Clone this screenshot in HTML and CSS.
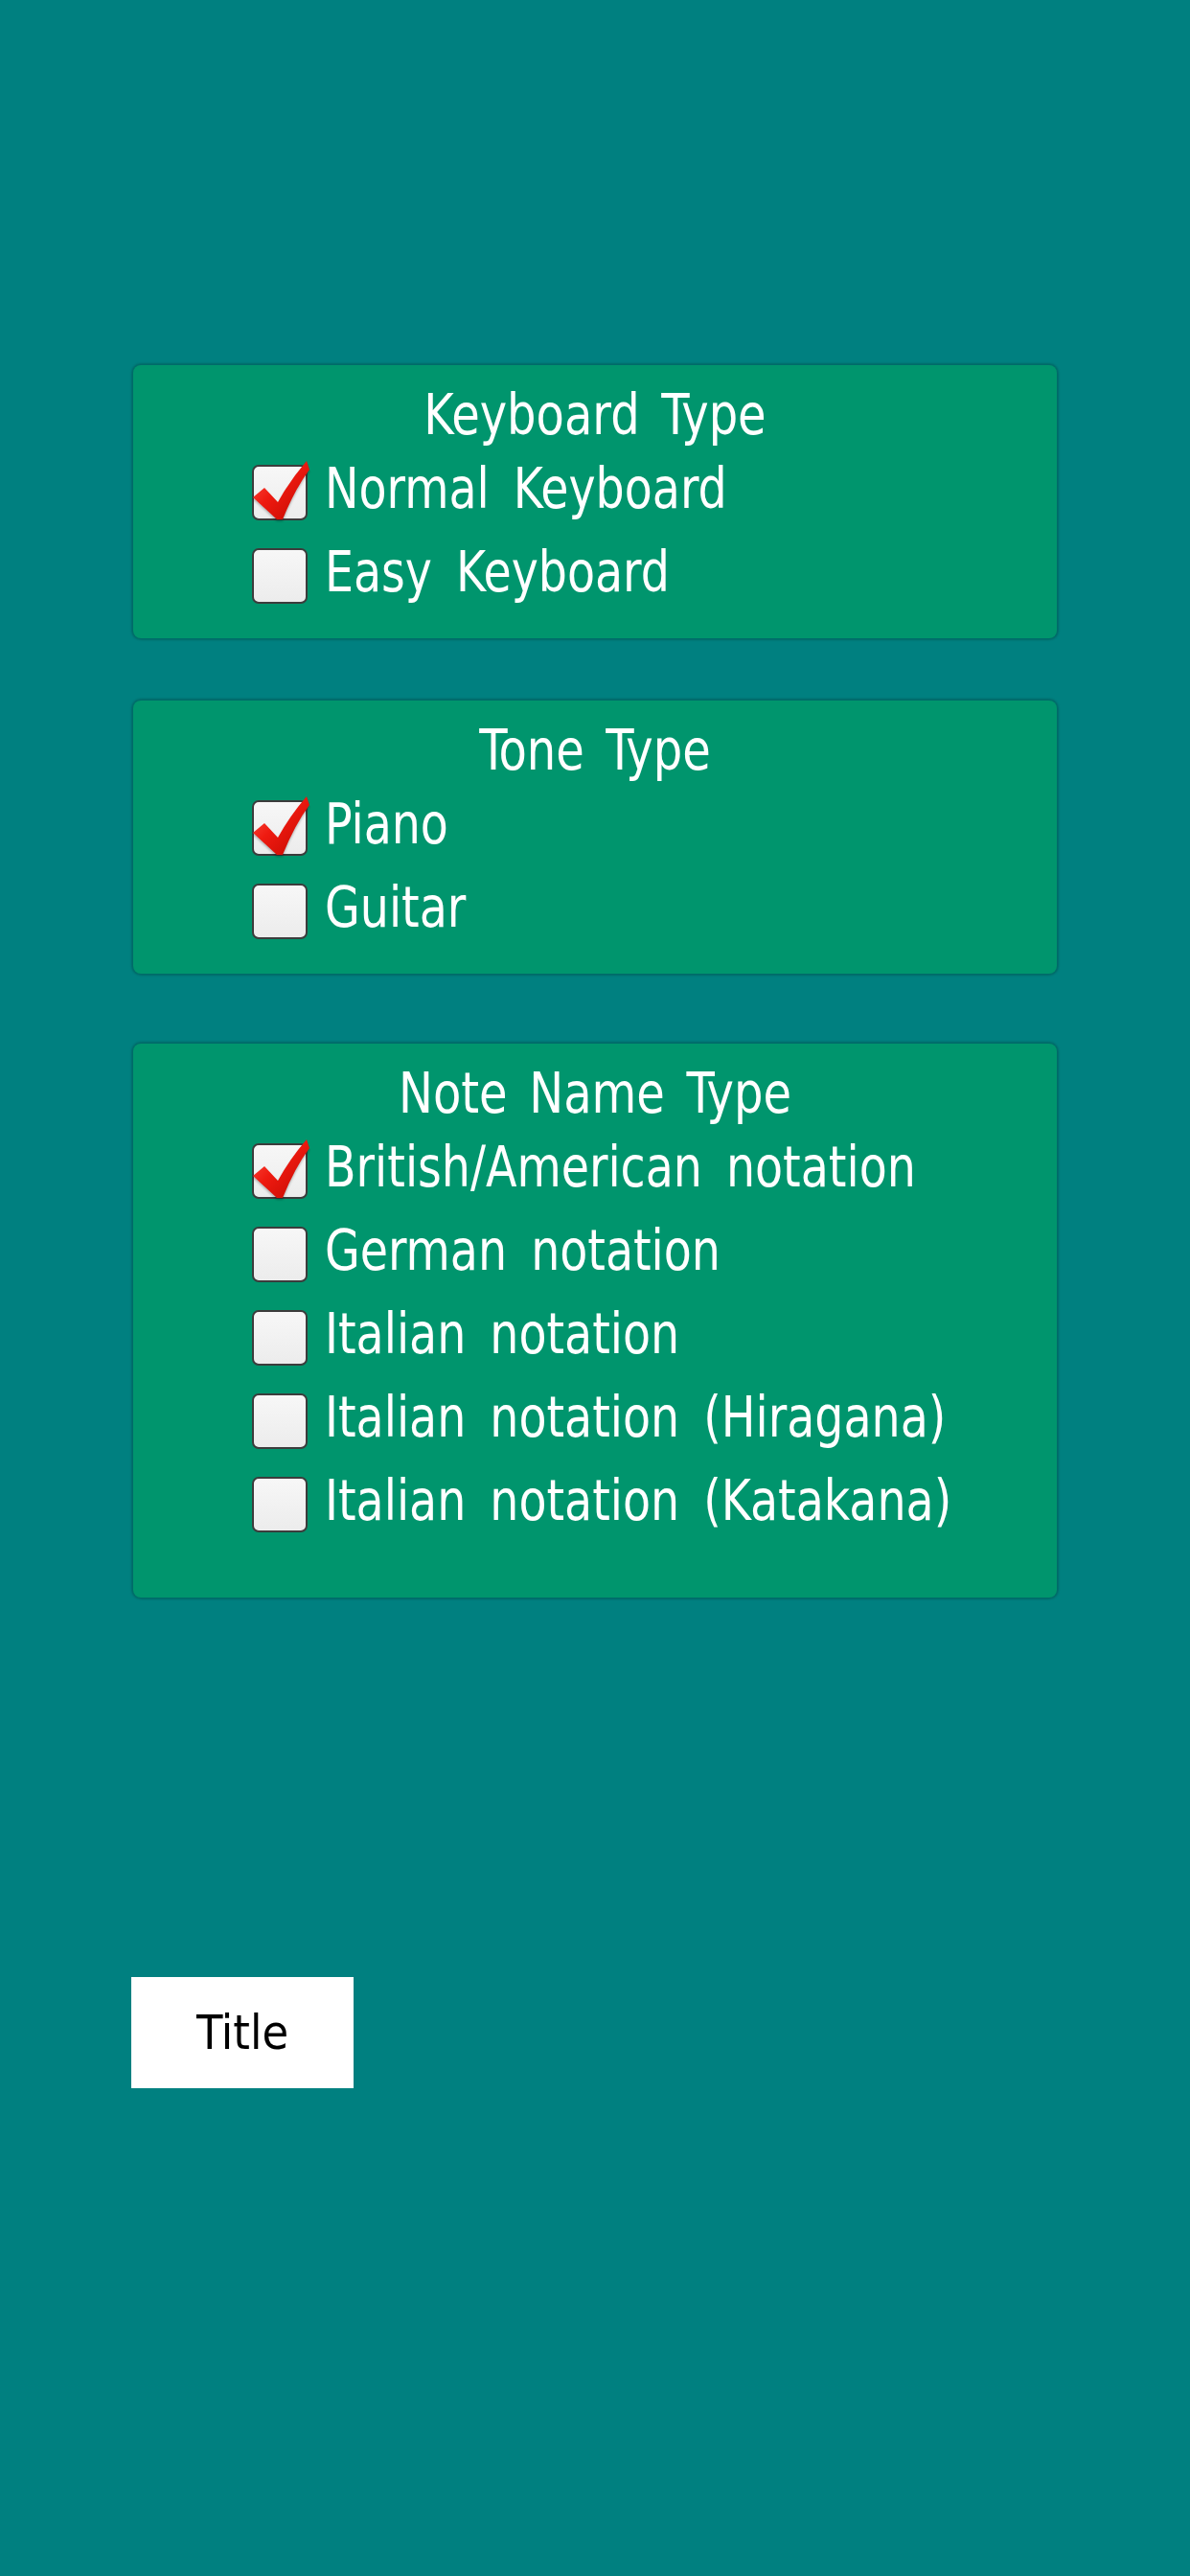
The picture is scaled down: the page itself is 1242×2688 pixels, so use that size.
FILE: index.html
```html
<!DOCTYPE html>
<html lang="en">
<head>
  <meta charset="UTF-8">
  <title>Settings</title>
  <link rel="stylesheet" href="styles.css">
</head>
<body>

  <div class="settings">

    <div class="panel">
      <h2 class="panel-title">Keyboard Type</h2>
      <div class="option checked">
        <span class="box"><svg class="tick" viewBox="0 0 58 58"><use href="#tick"/></svg></span>
        <span class="label">Normal Keyboard</span>
      </div>
      <div class="option">
        <span class="box"></span>
        <span class="label">Easy Keyboard</span>
      </div>
    </div>

    <div class="panel">
      <h2 class="panel-title">Tone Type</h2>
      <div class="option checked">
        <span class="box"><svg class="tick" viewBox="0 0 58 58"><use href="#tick"/></svg></span>
        <span class="label">Piano</span>
      </div>
      <div class="option">
        <span class="box"></span>
        <span class="label">Guitar</span>
      </div>
    </div>

    <div class="panel panel-notes">
      <h2 class="panel-title">Note Name Type</h2>
      <div class="option checked">
        <span class="box"><svg class="tick" viewBox="0 0 58 58"><use href="#tick"/></svg></span>
        <span class="label">British/American notation</span>
      </div>
      <div class="option">
        <span class="box"></span>
        <span class="label">German notation</span>
      </div>
      <div class="option">
        <span class="box"></span>
        <span class="label">Italian notation</span>
      </div>
      <div class="option">
        <span class="box"></span>
        <span class="label">Italian notation (Hiragana)</span>
      </div>
      <div class="option">
        <span class="box"></span>
        <span class="label">Italian notation (Katakana)</span>
      </div>
    </div>

    <button class="title-btn">Title</button>
  </div>

  <!-- shared check mark -->
  <svg width="0" height="0" class="defs">
    <defs>
      <linearGradient id="tickFill" x1="0" y1="0" x2="1" y2="1">
        <stop offset="0" stop-color="#ff5a4a"/>
        <stop offset="0.45" stop-color="#ee1a10"/>
        <stop offset="1" stop-color="#c00800"/>
      </linearGradient>
      <symbol id="tick" viewBox="0 0 58 58" overflow="visible">
        <path d="M1,34 L13,24 L27,39 Q39,17 57,-4 L60,5 Q45,25 32,57 L26,57 Z" fill="url(#tickFill)"/>
      </symbol>
    </defs>
  </svg>

</body>
</html>
```

FILE: styles.css
```css
:root {
  --bg: #008080;
  --panel: #00956d;
  --text: #ffffff;
}

body {
  margin: 0;
  width: 1242px;
  height: 2688px;
  background-color: var(--bg);
  font-family: 'Liberation Sans Narrow', 'DejaVu Sans Condensed', 'Liberation Sans', sans-serif;
  overflow: hidden;
}

.defs {
  position: absolute;
}

.settings {
  display: flex;
  flex-direction: column;
  align-items: flex-start;
  padding: 381px 0 0 139px;
}

.panel {
  width: 964px;
  box-sizing: border-box;
  background-color: var(--panel);
  border-radius: 8px;
  box-shadow: 0 0 2px 2px rgba(0, 40, 30, 0.25);
  padding: 23px 0 36px 124px;
  margin-bottom: 65px;
  display: flex;
  flex-direction: column;
  gap: 29px;
}

.panel-notes {
  margin-top: 8px;
  padding-bottom: 68px;
}

.panel-title {
  margin: 0 0 -6px -124px;
  font-size: 58px;
  line-height: 58px;
  font-weight: normal;
  text-align: center;
  color: var(--text);
  word-spacing: 8px;
  transform: scaleX(0.92);
}

.option {
  display: flex;
  align-items: flex-start;
  gap: 18px;
  height: 58px;
}

.box {
  width: 58px;
  height: 58px;
  box-sizing: border-box;
  flex-shrink: 0;
  border: 2px solid #3c3c3c;
  border-radius: 7px;
  background: linear-gradient(#f7f7f7, #ececec);
}

.tick {
  width: 58px;
  height: 58px;
  margin: -2px 0 0 -2px;
  overflow: visible;
  filter: drop-shadow(0 2px 1px rgba(0, 0, 0, 0.25));
}

/* labels are a touch narrower than the condensed face, with wide spaces */
.label {
  margin-top: -4px;
  font-size: 58px;
  line-height: 58px;
  color: var(--text);
  white-space: nowrap;
  word-spacing: 11px;
  transform: scaleX(0.91);
  transform-origin: left center;
}

.title-btn {
  margin: 331px 0 0 -2px;
  width: 232px;
  height: 116px;
  border: none;
  border-radius: 0;
  background: #ffffff;
  color: #000000;
  font-family: inherit;
  font-size: 50px;
  padding: 0;
}
```
